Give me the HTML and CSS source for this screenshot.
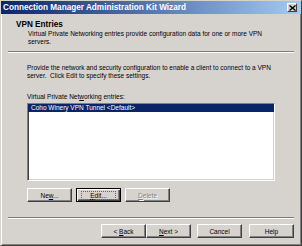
FILE: index.html
```html
<!DOCTYPE html>
<html lang="en">
<head>
  <meta charset="UTF-8">
  <title>Connection Manager Administration Kit Wizard</title>
  <link rel="stylesheet" href="styles.css">
</head>
<body>
  <div class="window">
    <div class="titlebar">
      <span class="title">Connection Manager Administration Kit Wizard</span>
      <span class="close-btn">
        <svg width="7" height="6" viewBox="0 0 7 6"><path d="M0.5 0.5 L6.5 5.5 M6.5 0.5 L0.5 5.5" stroke="#000" stroke-width="1.4"/></svg>
      </span>
    </div>

    <div class="header">
      <h1>VPN Entries</h1>
      <p class="subtitle">Virtual Private Networking entries provide configuration data for one or more VPN servers.</p>
    </div>
    <div class="etched"></div>

    <div class="page">
      <p class="intro">Provide the network and security configuration to enable a client to connect to a VPN server.&nbsp; Click Edit to specify these settings.</p>
      <div class="list-label">Virtual Private Net<u>w</u>orking entries:</div>
      <div class="listbox">
        <div class="list-item selected">Coho Winery VPN Tunnel &lt;Default&gt;</div>
      </div>
      <div class="list-buttons">
        <button class="btn"><span>Ne<u>w</u>...</span></button>
        <button class="btn btn-default"><span class="focus"><u>E</u>dit...</span></button>
        <button class="btn" disabled><span><u>D</u>elete</span></button>
      </div>
    </div>

    <div class="etched bottom-line"></div>

    <div class="footer">
      <button class="btn"><span>&lt; <u>B</u>ack</span></button>
      <button class="btn"><span><u>N</u>ext &gt;</span></button>
      <button class="btn cancel"><span>Cancel</span></button>
      <button class="btn help"><span>Help</span></button>
    </div>
  </div>
</body>
</html>
```

FILE: styles.css
```css
body {
  margin: 0;
  font-family: "Liberation Sans", Arial, sans-serif;
  font-size: 6.5px;
  color: #000;
  background-color: #d6d3ce;
}
.window {
  width: 302px;
  height: 246px;
  box-sizing: border-box;
  background-color: #d6d3ce;
  border: 1px solid;
  border-color: #d6d3ce #404040 #404040 #d6d3ce;
  box-shadow: inset 1px 1px #fff, inset -1px -1px #808080;
}
.titlebar {
  height: 13px;
  display: flex;
  align-items: center;
  padding: 0 4px 0 2px;
  background: linear-gradient(to right, #0a246a, #a6caf0);
}
.title {
  color: #fff;
  font-weight: bold;
  font-size: 8.2px;
  white-space: nowrap;
}
.close-btn {
  margin-left: auto;
  width: 8px;
  height: 7px;
  display: flex;
  align-items: center;
  justify-content: center;
  background-color: #d6d3ce;
  border: 1px solid;
  border-color: #fff #404040 #404040 #fff;
}
.header {
  padding: 6px 0 0 15px;
}
h1 {
  margin: 0;
  font-size: 8.2px;
  line-height: 10px;
  font-weight: bold;
}
.subtitle {
  margin: 0;
  padding-left: 12px;
  width: 240px;
  line-height: 8px;
}
.etched {
  margin: 5px 7px 0 7px;
  height: 0;
  border-top: 1px solid #808080;
  border-bottom: 1px solid #fff;
}
.page {
  padding-left: 26px;
}
.intro {
  margin: 11px 0 0 0;
  width: 250px;
  line-height: 8px;
}
.list-label {
  margin-top: 13px;
  line-height: 8px;
}
.listbox {
  margin-top: 2px;
  width: 248px;
  height: 78px;
  box-sizing: border-box;
  background-color: #fff;
  border: 1px solid;
  border-color: #808080 #fff #fff #808080;
  box-shadow: inset 1px 1px #404040, inset -1px -1px #d6d3ce;
}
.list-item {
  height: 8px;
  line-height: 8px;
  padding-left: 3px;
  white-space: nowrap;
}
.selected {
  background-color: #0a246a;
  color: #fff;
}
.list-buttons {
  display: flex;
  gap: 4px;
  margin-top: 7px;
}
.btn {
  width: 45px;
  height: 14px;
  padding: 0;
  margin: 0;
  font-family: inherit;
  font-size: 6.5px;
  color: #000;
  background-color: #d6d3ce;
  border: 1px solid;
  border-color: #fff #404040 #404040 #fff;
  box-shadow: inset -1px -1px #808080;
  display: flex;
  align-items: center;
  justify-content: center;
}
.btn span {
  white-space: pre;
}
.btn-default {
  border-color: #000;
  box-shadow: inset 1px 1px #fff, inset -1px -1px #404040, inset -2px -2px #808080;
}
.focus {
  outline: 1px dotted #666;
  width: 33px;
  height: 7px;
  line-height: 7px;
  text-align: center;
}
.btn:disabled {
  color: #808080;
  text-shadow: 1px 1px #fff;
}
.bottom-line {
  margin-top: 15px;
}
.footer {
  display: flex;
  justify-content: flex-end;
  margin-top: 5px;
  padding-right: 7px;
}
.cancel {
  margin-left: 6px;
}
.help {
  margin-left: 7px;
}
```
